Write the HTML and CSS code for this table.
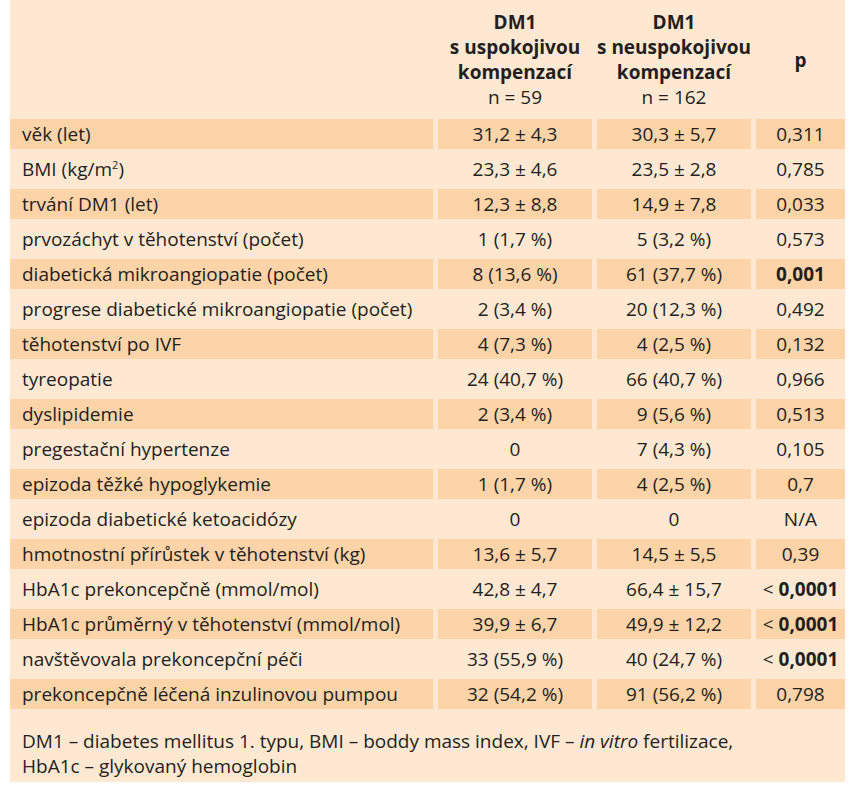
FILE: index.html
```html
<!DOCTYPE html>
<html lang="cs">
<head>
    <meta charset="UTF-8">
    <meta name="viewport" content="width=device-width, initial-scale=1.0">
    <title>DM1 – srovnání skupin</title>
    <link rel="stylesheet" href="styles.css">
</head>
<body>
    <!-- Table panel -->
    <div class="panel">
        <div class="table-clip">
            <table class="data-table">
                <thead>
                    <tr>
                        <th class="label-col"></th>
                        <th class="val-col">DM1<br>s uspokojivou<br>kompenzací<br><span class="n">n = 59</span></th>
                        <th class="val-col">DM1<br>s neuspokojivou<br>kompenzací<br><span class="n">n = 162</span></th>
                        <th class="p-col">p</th>
                    </tr>
                </thead>
                <tbody>
                    <tr class="dark"><td>věk (let)</td><td>31,2 ± 4,3</td><td>30,3 ± 5,7</td><td>0,311</td></tr>
                    <tr><td>BMI (kg/m<sup>2</sup>)</td><td>23,3 ± 4,6</td><td>23,5 ± 2,8</td><td>0,785</td></tr>
                    <tr class="dark"><td>trvání DM1 (let)</td><td>12,3 ± 8,8</td><td>14,9 ± 7,8</td><td>0,033</td></tr>
                    <tr><td>prvozáchyt v těhotenství (počet)</td><td>1 (1,7 %)</td><td>5 (3,2 %)</td><td>0,573</td></tr>
                    <tr class="dark"><td>diabetická mikroangiopatie (počet)</td><td>8 (13,6 %)</td><td>61 (37,7 %)</td><td><b>0,001</b></td></tr>
                    <tr><td>progrese diabetické mikroangiopatie (počet)</td><td>2 (3,4 %)</td><td>20 (12,3 %)</td><td>0,492</td></tr>
                    <tr class="dark"><td>těhotenství po IVF</td><td>4 (7,3 %)</td><td>4 (2,5 %)</td><td>0,132</td></tr>
                    <tr><td>tyreopatie</td><td>24 (40,7 %)</td><td>66 (40,7 %)</td><td>0,966</td></tr>
                    <tr class="dark"><td>dyslipidemie</td><td>2 (3,4 %)</td><td>9 (5,6 %)</td><td>0,513</td></tr>
                    <tr><td>pregestační hypertenze</td><td>0</td><td>7 (4,3 %)</td><td>0,105</td></tr>
                    <tr class="dark"><td>epizoda těžké hypoglykemie</td><td>1 (1,7 %)</td><td>4 (2,5 %)</td><td>0,7</td></tr>
                    <tr><td>epizoda diabetické ketoacidózy</td><td>0</td><td>0</td><td>N/A</td></tr>
                    <tr class="dark"><td>hmotnostní přírůstek v těhotenství (kg)</td><td>13,6 ± 5,7</td><td>14,5 ± 5,5</td><td>0,39</td></tr>
                    <tr><td>HbA1c prekoncepčně (mmol/mol)</td><td>42,8 ± 4,7</td><td>66,4 ± 15,7</td><td>&lt; <b>0,0001</b></td></tr>
                    <tr class="dark"><td>HbA1c průměrný v těhotenství (mmol/mol)</td><td>39,9 ± 6,7</td><td>49,9 ± 12,2</td><td>&lt; <b>0,0001</b></td></tr>
                    <tr><td>navštěvovala prekoncepční péči</td><td>33 (55,9 %)</td><td>40 (24,7 %)</td><td>&lt; <b>0,0001</b></td></tr>
                    <tr class="dark"><td>prekoncepčně léčená inzulinovou pumpou</td><td>32 (54,2 %)</td><td>91 (56,2 %)</td><td>0,798</td></tr>
                </tbody>
            </table>
        </div>
        <p class="note">DM1 – diabetes mellitus 1. typu, BMI – boddy mass index, IVF – <i>in vitro</i> fertilizace,<br>HbA1c – glykovaný hemoglobin</p>
    </div>
</body>
</html>
```

FILE: styles.css
```css
body, html {
    margin: 0;
    background-color: #ffffff;
}

/* Light orange panel holding the table */
.panel {
    width: 835px;
    margin-left: 10px;
    background-color: #fee8d2;
    color: #231f20;
    font-family: "Open Sans", sans-serif;
    font-size: 19px;
}

/* Hides the outer border-spacing so cells sit flush with the panel */
.table-clip {
    overflow: hidden;
}

.data-table {
    width: calc(100% + 10px);
    margin: -5px;
    border-collapse: separate;
    border-spacing: 5px;
    table-layout: fixed;
}

.data-table th {
    font-weight: bold;
    line-height: 25px;
    padding: 10px 0 4px;
    text-align: center;
    vertical-align: middle;
}

.data-table th .n {
    font-weight: normal;
}

.label-col {
    width: 423px;
}

.val-col {
    width: 154px;
}

.p-col {
    width: 89px;
}

.data-table td {
    height: 30px;
    padding: 0;
    text-align: center;
    vertical-align: middle;
    white-space: nowrap;
}

.data-table td:first-child {
    text-align: left;
    padding-left: 12px;
}

.data-table tr.dark td {
    background-color: #fdd3a8;
}

.data-table sup {
    font-size: 11px;
    line-height: 0;
}

/* Abbreviation footnote */
.note {
    margin: 0;
    padding: 20px 12px 3px;
    line-height: 25px;
}
```
